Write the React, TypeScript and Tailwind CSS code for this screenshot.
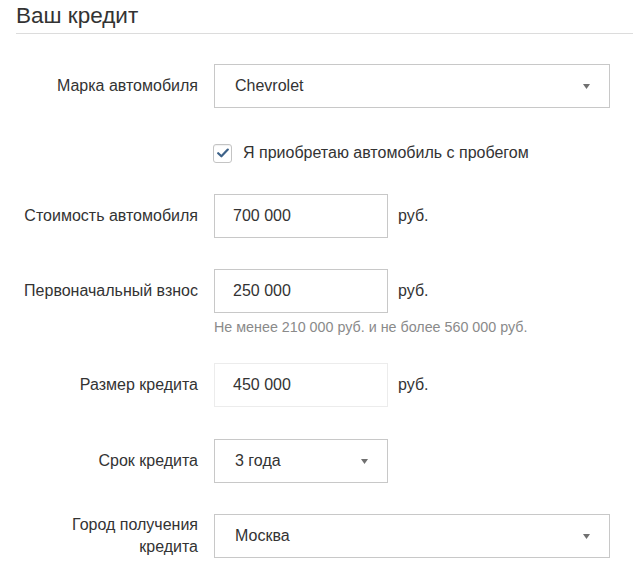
function Arrow() {
  return (
    <svg width="7" height="5" viewBox="0 0 7 5" className="shrink-0">
      <path d="M0 0 H7 L3.5 5 Z" fill="#707070" />
    </svg>
  );
}

function Row({
  label,
  children,
  className = "",
}: {
  label: React.ReactNode;
  children: React.ReactNode;
  className?: string;
}) {
  return (
    <div className={`grid grid-cols-[198px_1fr] gap-x-4 items-center -ml-4 ${className}`}>
      <div className="text-right text-[16px] leading-[22px] text-[#333]">{label}</div>
      <div className="flex items-center">{children}</div>
    </div>
  );
}

const box = "h-[44px] border border-[#c8c8c8] flex items-center text-[16px] text-[#333]";

export default function App() {
  return (
    <div className="bg-white w-[633px] h-[569px] overflow-hidden pl-4 pt-[3px] font-['Liberation_Sans',Arial,sans-serif]">
      <h2 className="text-[22.5px] leading-[26px] text-[#333] pb-[4px] border-b border-[#dcdcdc]">
        Ваш кредит
      </h2>

      <Row label="Марка автомобиля" className="mt-[30px]">
        <div className={`${box} w-[396px] justify-between pl-5 pr-[19px]`}>
          <span>Chevrolet</span>
          <Arrow />
        </div>
      </Row>

      <Row label="" className="mt-[33px]">
        <label className="flex items-center gap-[11px] text-[16px] text-[#333] -ml-px">
          <span className="w-[19px] h-[19px] rounded-[3px] border border-[#c4c4c4] bg-white flex items-center justify-center shadow-[inset_0_1px_1px_rgba(0,0,0,0.06)]">
            <svg width="12" height="10" viewBox="0 0 12 10">
              <path d="M1.2 5.2 L4.4 8.3 L10.8 1.6" fill="none" stroke="#3d6289" strokeWidth="2.2" strokeLinecap="round" strokeLinejoin="round" />
            </svg>
          </span>
          <span>Я приобретаю автомобиль с пробегом</span>
        </label>
      </Row>

      <Row label="Стоимость автомобиля" className="mt-[29px]">
        <div className={`${box} w-[174px] pl-[18px]`}>700 000</div>
        <span className="ml-[10px] text-[16px] text-[#333]">руб.</span>
      </Row>

      <Row label="Первоначальный взнос" className="mt-[31px]">
        <div className={`${box} w-[174px] pl-[18px]`}>250 000</div>
        <span className="ml-[10px] text-[16px] text-[#333]">руб.</span>
      </Row>
      <div className="grid grid-cols-[198px_1fr] gap-x-4 -ml-4 mt-[5px]">
        <div />
        <div className="text-[14.3px] leading-[18px] text-[#8a8a8a]">
          Не менее 210 000 руб. и не более 560 000 руб.
        </div>
      </div>

      <Row label="Размер кредита" className="mt-[27px]">
        <div className="w-[174px] h-[44px] border border-[#ececec] flex items-center pl-[18px] text-[16px] text-[#333]">
          450 000
        </div>
        <span className="ml-[10px] text-[16px] text-[#333]">руб.</span>
      </Row>

      <Row label="Срок кредита" className="mt-[32px]">
        <div className={`${box} w-[174px] justify-between pl-5 pr-[19px]`}>
          <span>3 года</span>
          <Arrow />
        </div>
      </Row>

      <Row
        label={
          <>
            Город получения
            <br />
            кредита
          </>
        }
        className="mt-[31px]"
      >
        <div className={`${box} w-[396px] justify-between pl-5 pr-[19px]`}>
          <span>Москва</span>
          <Arrow />
        </div>
      </Row>
    </div>
  );
}
